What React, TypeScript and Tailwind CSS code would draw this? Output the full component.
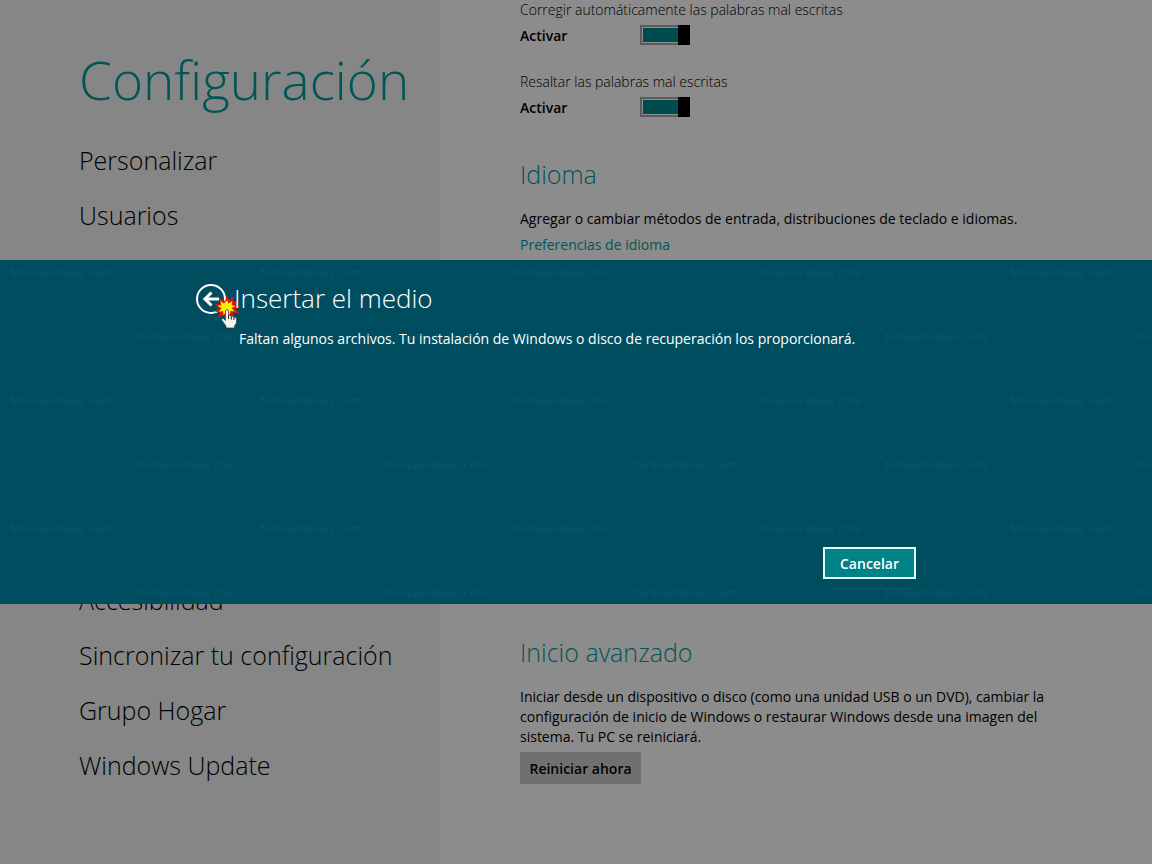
import { useState } from 'react'

const NAV_TOP = ['Personalizar', 'Usuarios']
const NAV_BOTTOM = ['Accesibilidad', 'Sincronizar tu configuración', 'Grupo Hogar', 'Windows Update']

const MARK_ROWS = [0, 1, 2, 3, 4, 5]
const MARK_COLS = [0, 1, 2, 3, 4]

function NavItem({ label }: { label: string }) {
  return (
    <a href="#" className="block h-[55px] whitespace-nowrap text-[25px] leading-[55px] font-light text-black">
      {label}
    </a>
  )
}

function Toggle({ id, label }: { id: string; label: string }) {
  const [on, setOn] = useState(true)

  return (
    <div className="h-[72px]">
      <label htmlFor={id} className="block leading-5 font-light">{label}</label>
      <div className="flex h-[30px] items-center">
        <span className="w-[120px] text-[14px] font-semibold">{on ? 'Activar' : 'Desactivar'}</span>
        <span className={`relative flex h-5 w-[50px] border-2 border-[#5c5c5c] p-px ${on ? 'justify-end' : 'justify-start'}`}>
          <input
            id={id}
            type="checkbox"
            checked={on}
            onChange={e => setOn(e.target.checked)}
            className="h-full w-full appearance-none bg-[#5c5c5c] checked:bg-[#004b4e]"
          />
          <span className={`pointer-events-none absolute -top-0.5 h-5 w-3 bg-black ${on ? '-right-0.5' : '-left-0.5'}`} />
        </span>
      </div>
    </div>
  )
}

function Watermark() {
  return (
    <div aria-hidden="true" className="pointer-events-none absolute inset-0 overflow-hidden pt-1.5">
      {MARK_ROWS.map(r => (
        <div key={r} className={`flex h-16 ${r % 2 ? 'pl-[135px]' : 'pl-[10px]'}`}>
          {MARK_COLS.map(c => (
            <span key={c} className="w-[250px] shrink-0 font-['DejaVu_Sans'] text-[11px] leading-4 text-[#0a5768]">
              foroswindows.com
            </span>
          ))}
        </div>
      ))}
    </div>
  )
}

// Starburst plus hand pointer, drawn over the back button
function ClickPointer() {
  return (
    <svg viewBox="0 0 26 34" className="pointer-events-none absolute top-[11px] left-[19px] h-[34px] w-[26px]">
      <path
        d="M12 0l2 5 5-4-1 6 6-2-3 5 5 2-6 2 5 5-7-2 1 6-5-4-3 6-2-5-6 3 2-6-5 0 4-4-4-4 6 0-2-6 6 3z"
        fill="#e01408"
      />
      <path d="M12 5l1.500 3.500 4-2.500-1 4 4 1-4 2 3 3.500-4-.500-1 4-3-3-3 3-.500-4-4 1 2.500-4-4-2 4-1-1.500-4 4 2.500z" fill="#ffee00" />
      <path
        d="M10.500 16c0-1.800 3-1.800 3 0v5c1-.8 2.600-.4 2.800.6 1-.6 2.400-.2 2.600.8 1.200-.5 2.600.2 2.600 1.600v4l-2 3V33h-8.500v-2l-4-5.500c-1-1.600 .500-2.600 1.800-1.600l1.700 1.600z"
        fill="#f4f4f4"
        stroke="#333"
        strokeWidth=".7"
      />
      <path d="M13.500 21v3M16.300 21.600v3M18.900 22.400v2.600" stroke="#222" strokeWidth="1" />
    </svg>
  )
}

function InsertMediaDialog() {
  return (
    <div className="fixed inset-0 flex items-center">
      <section
        role="dialog"
        aria-labelledby="dialog-title"
        className="relative grid h-[344px] w-full grid-cols-[38px_682px_40px] justify-center bg-[#004d60] pt-6 text-white"
      >
        <Watermark />
        <button aria-label="Atrás" className="relative h-[30px] w-[30px]">
          <svg viewBox="0 0 30 30" fill="none" stroke="#fff" className="h-[30px] w-[30px]">
            <circle cx="15" cy="15" r="14" strokeWidth="2" />
            <path d="M8.500 15H23" strokeWidth="3" />
            <path d="M15.500 8.500L9 15l6.500 6.500" strokeWidth="3" />
          </svg>
          <ClickPointer />
        </button>
        <div className="relative flex h-[295px] flex-col">
          <h2 id="dialog-title" className="text-[26px] leading-7 font-light">Insertar el medio</h2>
          <p className="mt-[17px] ml-[5px] text-[14px] leading-5">
            Faltan algunos archivos. Tu instalación de Windows o disco de recuperación los proporcionará.
          </p>
          <button className="mt-auto h-8 w-[93px] self-end border-2 border-[#e8ffff] bg-[#008286] text-[14px] font-semibold">
            Cancelar
          </button>
        </div>
      </section>
    </div>
  )
}

export default function App() {
  return (
    <div className="flex min-h-screen bg-[#8c8c8c] font-['Open_Sans',sans-serif] text-[14px] text-black">
      <aside className="w-[440px] shrink-0 bg-[#868686] pt-10 pl-[79px]">
        <h1 className="h-[93px] text-[53px] leading-[80px] font-light text-[#005654]">Configuración</h1>
        <nav>
          {NAV_TOP.map(label => <NavItem key={label} label={label} />)}
          <div className="mt-[330px]">
            {NAV_BOTTOM.map(label => <NavItem key={label} label={label} />)}
          </div>
        </nav>
      </aside>

      <main className="w-[620px] pl-20">
        <Toggle id="autocorrect" label="Corregir automáticamente las palabras mal escritas" />
        <Toggle id="highlight" label="Resaltar las palabras mal escritas" />

        <h2 className="mt-2.5 text-[25px] leading-10 font-light text-[#005654]">Idioma</h2>
        <p className="mt-[15px] leading-5">Agregar o cambiar métodos de entrada, distribuciones de teclado e idiomas.</p>
        <a href="#" className="mt-1.5 block leading-5 text-[#005654]">Preferencias de idioma</a>

        <h2 className="mt-[377px] text-[25px] leading-10 font-light text-[#005654]">Inicio avanzado</h2>
        <p className="mt-[15px] leading-5">
          Iniciar desde un dispositivo o disco (como una unidad USB o un DVD), cambiar la configuración de inicio de
          Windows o restaurar Windows desde una imagen del sistema. Tu PC se reiniciará.
        </p>
        <button className="mt-[5px] h-8 w-[121px] bg-[#707070] text-[14px] font-semibold">Reiniciar ahora</button>
      </main>

      <InsertMediaDialog />
    </div>
  )
}
